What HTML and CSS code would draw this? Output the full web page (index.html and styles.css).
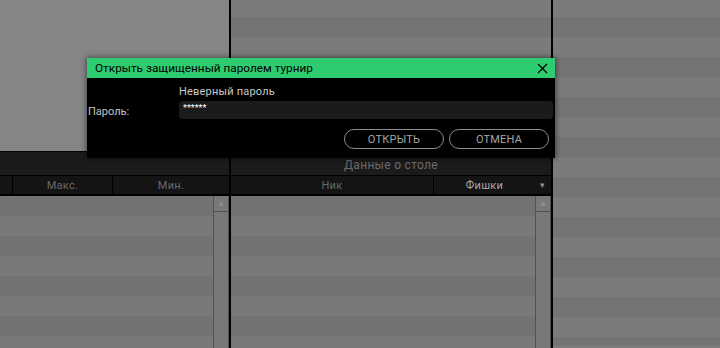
FILE: index.html
```html
<!DOCTYPE html>
<html lang="ru">
<head>
    <meta charset="UTF-8">
    <meta name="viewport" content="width=device-width, initial-scale=1.0">
    <title>Лобби</title>
    <link rel="stylesheet" href="styles.css">
</head>
<body>
    <div class="lobby">
        <div class="col col-tournaments">
            <div class="preview"></div>
            <div class="section-title"></div>
            <div class="col-heads">
                <div class="head-cell cell-narrow"></div>
                <div class="head-cell cell-max">Макс.</div>
                <div class="head-cell cell-min">Мин.</div>
            </div>
            <div class="list list-bottom">
                <div class="scrollbar">
                    <div class="scroll-up">
                        <svg width="6" height="5" viewBox="0 0 6 5"><polygon points="3,0 6,5 0,5" fill="#8c8c8c"/></svg>
                    </div>
                </div>
            </div>
        </div>

        <div class="col col-table">
            <div class="list list-top"></div>
            <div class="section-title">Данные о столе</div>
            <div class="col-heads">
                <div class="head-cell cell-nick">Ник</div>
                <div class="head-cell cell-chips sorted">Фишки<span class="sort-arrow">▾</span></div>
            </div>
            <div class="list list-bottom">
                <div class="scrollbar">
                    <div class="scroll-up">
                        <svg width="6" height="5" viewBox="0 0 6 5"><polygon points="3,0 6,5 0,5" fill="#8c8c8c"/></svg>
                    </div>
                </div>
            </div>
        </div>

        <div class="col col-players list list-top"></div>
    </div>

    <div class="modal-dialog">
        <div class="dialog-title">
            <span>Открыть защищенный паролем турнир</span>
            <button class="close-btn" type="button">
                <svg width="11" height="11" viewBox="0 0 11 11"><path d="M1 1 L10 10 M10 1 L1 10" stroke="#000" stroke-width="1.25"/></svg>
            </button>
        </div>
        <form class="dialog-body" onsubmit="return false">
            <div></div>
            <div class="error-text">Неверный пароль</div>
            <label class="field-label" for="pwd">Пароль:</label>
            <input class="field-input" id="pwd" type="text" value="******">
            <div class="dialog-buttons">
                <button class="pill-btn" type="submit">ОТКРЫТЬ</button>
                <button class="pill-btn" type="button">ОТМЕНА</button>
            </div>
        </form>
    </div>
</body>
</html>
```

FILE: styles.css
```css
body {
    margin: 0;
    width: 720px;
    height: 348px;
    overflow: hidden;
    background: #777777;
    font-family: Roboto, "Liberation Sans", Arial, sans-serif;
}

.lobby {
    display: flex;
    height: 348px;
}

.col {
    display: flex;
    flex-direction: column;
    border-right: 2px solid #000;
}

.col-tournaments {
    width: 229px;
}

.col-table {
    width: 320px;
}

.col-players {
    flex: 1;
    border-right: none;
}

.preview {
    height: 151px;
    background: #858585;
    border-bottom: 1px solid #000;
}

.list {
    position: relative;
    flex: 1;
}

.list-top {
    background: repeating-linear-gradient(#7b7b7b 0 20px, #747474 20px 40px);
    background-position: 0 -3px;
}

.col-table .list-top {
    flex: none;
    height: 151px;
    border-bottom: 1px solid #000;
}

.list-bottom {
    background: repeating-linear-gradient(#737373 0 20px, #797979 20px 40px);
}

.section-title {
    height: 23px;
    line-height: 26px;
    background: #1b1b1b;
    border-bottom: 1px solid #000;
    color: #6c6c6c;
    font-size: 12px;
    letter-spacing: 0.3px;
    text-align: center;
}

.col-heads {
    display: flex;
    height: 18px;
    background: #141414;
    border-bottom: 2px solid #000;
}

.head-cell {
    position: relative;
    line-height: 19px;
    font-size: 11px;
    letter-spacing: 0.3px;
    color: #6a6a6a;
    text-align: center;
    border-right: 1px solid #000;
}

.head-cell:last-child {
    border-right: none;
}

.cell-narrow { width: 12px; }
.cell-max { width: 99px; }
.cell-min { flex: 1; }

.cell-nick { width: 202px; }
.cell-chips {
    flex: 1;
    padding-right: 16px;
}

.sorted {
    color: #a9a9a9;
}

.sort-arrow {
    position: absolute;
    right: 6px;
    top: 0;
    font-size: 9px;
    color: #8e8e8e;
}

.scrollbar {
    position: absolute;
    top: 0;
    right: 0;
    bottom: 0;
    width: 14px;
    background: #787878;
    border-left: 1px solid #525252;
    border-right: 1px solid #525252;
}

.scroll-up {
    height: 15px;
    border-bottom: 1px solid #525252;
    display: flex;
    align-items: center;
    justify-content: center;
}

/* password dialog */
.modal-dialog {
    position: absolute;
    left: 87px;
    top: 58px;
    width: 468px;
    height: 100px;
    background: #000;
    box-shadow: 0 0 5px 1px rgba(0, 0, 0, 0.45);
}

.dialog-title {
    display: flex;
    align-items: center;
    justify-content: space-between;
    height: 20px;
    padding: 0 7px 0 8px;
    background: #2ecc71;
    color: #000;
    font-size: 11.8px;
}

.close-btn {
    border: none;
    background: none;
    padding: 0;
    width: 11px;
    height: 11px;
    display: flex;
}

.dialog-body {
    display: grid;
    grid-template-columns: 91px 1fr;
    align-items: center;
    padding: 7px 2px 0 1px;
    margin: 0;
}

.error-text {
    line-height: 14px;
    font-size: 11px;
    letter-spacing: 0.2px;
    color: #c8c8c8;
    margin-bottom: 2px;
}

.field-label {
    font-size: 11px;
    color: #c4c4c4;
    padding-top: 2px;
}

.field-input {
    height: 18px;
    box-sizing: border-box;
    border: none;
    border-radius: 4px;
    background: #1b1b1b;
    color: #fff;
    font-family: inherit;
    font-size: 9px;
    padding: 0 4px 4px;
    outline: none;
}

.dialog-buttons {
    grid-column: 1 / 3;
    display: flex;
    justify-content: flex-end;
    gap: 5px;
    margin-top: 10px;
    padding-right: 4px;
}

.pill-btn {
    width: 100px;
    height: 20px;
    border: 1px solid #8c8c8c;
    border-radius: 10px;
    background: #000;
    color: #a4a4a4;
    font-family: inherit;
    font-size: 11px;
    letter-spacing: 0.2px;
    padding: 0;
}
```
